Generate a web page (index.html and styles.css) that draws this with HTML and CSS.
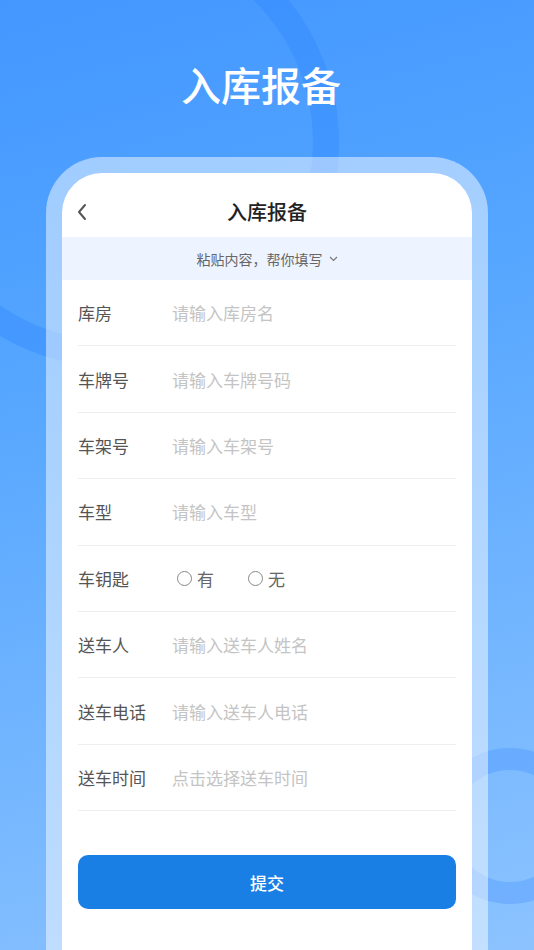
FILE: index.html
```html
<!DOCTYPE html>
<html lang="zh-CN">
<head>
<meta charset="utf-8">
<title>入库报备</title>
<link rel="stylesheet" href="styles.css">
</head>
<body>
<div class="page">
  <svg class="bg-deco" width="534" height="950" viewBox="0 0 534 950" aria-hidden="true">
    <circle cx="114" cy="142" r="212" fill="none" stroke="#2f86ff" stroke-opacity="0.4" stroke-width="26"/>
    <circle cx="510" cy="826" r="67" fill="none" stroke="#3d8cff" stroke-opacity="0.3" stroke-width="22"/>
  </svg>
  <h1 class="hero-title">入库报备</h1>
  <div class="frame">
    <div class="card">
      <header class="nav">
        <span class="nav-back">
          <svg width="12" height="18" viewBox="0 0 12 18"><path d="M9 2 L3 9 L9 16" fill="none" stroke="#555" stroke-width="2" stroke-linecap="round" stroke-linejoin="round"/></svg>
        </span>
        <span class="nav-title">入库报备</span>
        <span></span>
      </header>
      <div class="paste">粘贴内容，帮你填写<svg class="paste-arrow" width="9" height="6" viewBox="0 0 9 6"><path d="M1 1 L4.5 4.5 L8 1" fill="none" stroke="#777" stroke-width="1.2"/></svg></div>
      <div class="form">
        <div class="row"><span class="label">库房</span><input class="field" placeholder="请输入库房名"></div>
        <div class="row"><span class="label">车牌号</span><input class="field" placeholder="请输入车牌号码"></div>
        <div class="row"><span class="label">车架号</span><input class="field" placeholder="请输入车架号"></div>
        <div class="row"><span class="label">车型</span><input class="field" placeholder="请输入车型"></div>
        <div class="row"><span class="label">车钥匙</span>
          <div class="radios">
            <span class="radio"><span class="dot"></span>有</span>
            <span class="radio"><span class="dot"></span>无</span>
          </div>
        </div>
        <div class="row"><span class="label">送车人</span><input class="field" placeholder="请输入送车人姓名"></div>
        <div class="row"><span class="label">送车电话</span><input class="field" placeholder="请输入送车人电话"></div>
        <div class="row"><span class="label">送车时间</span><input class="field" placeholder="点击选择送车时间"></div>
      </div>
      <button class="submit" type="button">提交</button>
    </div>
  </div>
</div>
</body>
</html>
```

FILE: styles.css
```css
* { box-sizing: border-box; }
html, body {
  margin: 0;
  padding: 0;
}
body {
  font-family: "Noto Sans CJK SC", "Noto Sans", sans-serif;
}
.page {
  position: relative;
  width: 534px;
  height: 950px;
  overflow: hidden;
  background: linear-gradient(165deg, #4397ff 0%, #55a6ff 35%, #8cc3ff 100%);
  display: flex;
  flex-direction: column;
}
.bg-deco {
  position: absolute;
  left: 0;
  top: 0;
  z-index: 0;
}
.hero-title {
  position: relative;
  z-index: 1;
  margin: 0;
  padding: 56px 12px 0 0;
  height: 115px;
  line-height: 56px;
  text-align: center;
  color: #fff;
  font-size: 40px;
  font-weight: 500;
}
.frame {
  position: relative;
  z-index: 1;
  flex: 1;
  margin: 42px 46px 0;
  padding: 16px 16px 0;
  background: rgba(255, 255, 255, 0.48);
  border-radius: 56px 56px 0 0;
  display: flex;
}
.card {
  flex: 1;
  background: #fff;
  border-radius: 40px 40px 0 0;
  overflow: hidden;
}
.nav {
  height: 64px;
  padding-top: 13px;
  display: grid;
  grid-template-columns: 50px 1fr 50px;
  align-items: center;
}
.nav-back {
  display: flex;
  align-items: center;
  padding-left: 14px;
}
.nav-title {
  text-align: center;
  font-size: 20px;
  font-weight: 500;
  color: #222;
}
.paste {
  height: 43px;
  background: #eef4ff;
  display: flex;
  align-items: center;
  justify-content: center;
  font-size: 14px;
  color: #666;
}
.paste-arrow {
  margin-left: 6px;
  margin-top: 1px;
}
.form {
  padding: 0 16px;
}
.row {
  height: 66.4px;
  border-bottom: 1px solid #eeeeee;
  display: flex;
  align-items: center;
}
.label {
  width: 94px;
  flex: none;
  font-size: 17px;
  color: #555;
}
.field {
  flex: 1;
  border: 0;
  outline: none;
  padding: 0;
  background: transparent;
  font-family: "Noto Sans CJK SC", "Noto Sans", sans-serif;
  font-size: 17px;
  color: #333;
}
.field::placeholder {
  color: #c4c4c4;
}
.radios {
  display: flex;
  gap: 34px;
  padding-left: 5px;
}
.radio {
  display: flex;
  align-items: center;
  font-size: 17px;
  color: #666;
}
.dot {
  flex: none;
  width: 15px;
  height: 15px;
  border: 1.3px solid #888;
  border-radius: 50%;
  margin-right: 5px;
}
.submit {
  display: block;
  width: calc(100% - 32px);
  margin: 44px 16px 0;
  height: 54px;
  border: 0;
  border-radius: 10px;
  background: #1a7fe5;
  color: #fff;
  font-family: "Noto Sans CJK SC", "Noto Sans", sans-serif;
  font-size: 17px;
  font-weight: 500;
}
```
